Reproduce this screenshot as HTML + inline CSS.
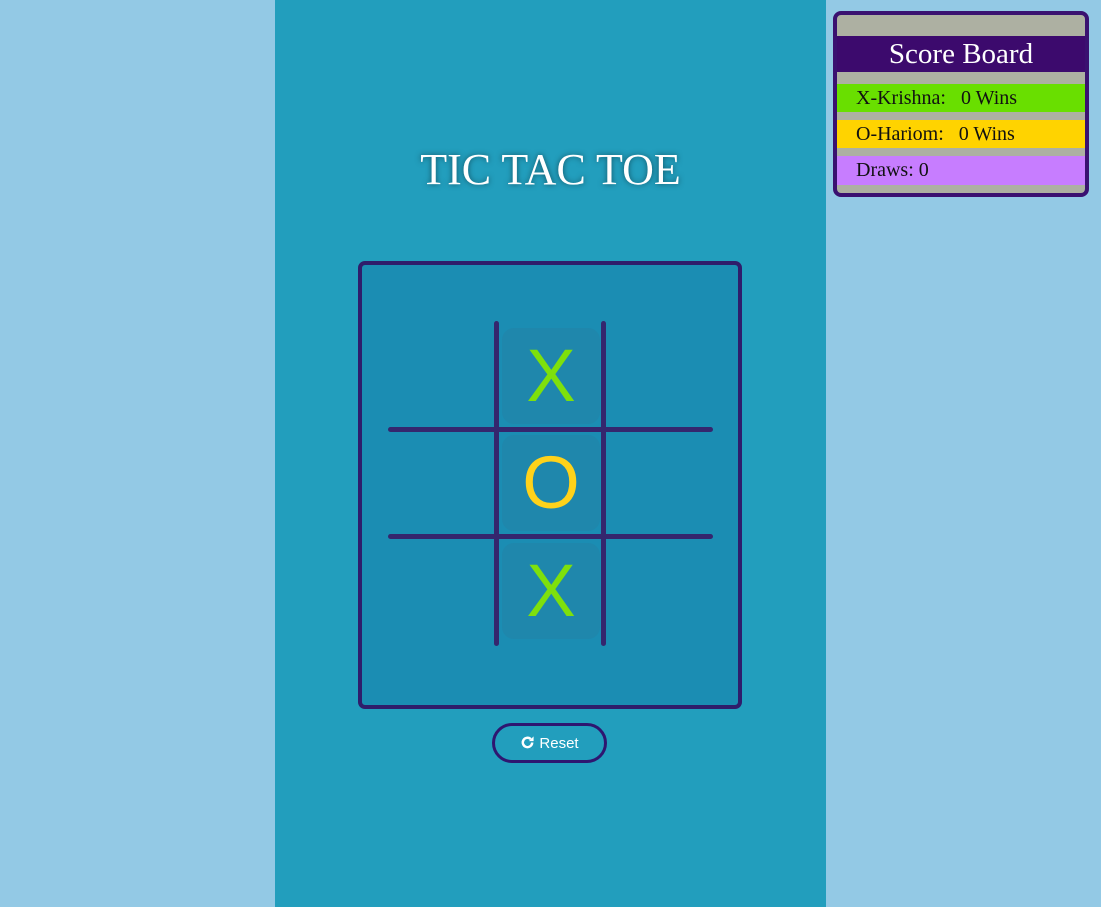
<!DOCTYPE html>
<html><head><style>
body{margin:0;width:1101px;height:907px;background:#93c9e5;position:relative;overflow:hidden;font-family:"Liberation Serif",serif}
.c{position:absolute;left:275px;top:0;width:551px;height:907px;background:#229ebd}
h1{position:absolute;left:275px;width:551px;top:145px;margin:0;text-align:center;font-weight:normal;font-size:44px;color:#fff;text-shadow:0 0 6px rgba(0,0,0,.5);line-height:50px}
.b{position:absolute;left:358px;top:261px;width:376px;height:440px;border:4px solid #2f1d6b;border-radius:7px;background:#1b8db3}
.l{position:absolute;background:#35266e;border-radius:3px}
.cell{position:absolute;left:502px;width:98px;height:96px;background:#1f87ac;border-radius:12px;font-family:"Liberation Sans",sans-serif;font-size:74px;text-align:center;line-height:96px}
.s{position:absolute;left:833px;top:11px;width:248px;height:178px;border:4px solid #3a1170;border-radius:8px;background:#adb0a2;overflow:hidden}
.r{position:absolute;left:0;width:248px;font-size:20px;padding-left:19px;box-sizing:border-box;color:#111}
.btn{position:absolute;left:492px;top:723px;width:109px;height:34px;border:3px solid #2e1670;border-radius:20px;font-family:"Liberation Sans",sans-serif;color:#fff;font-size:15px;line-height:36px;text-align:center}
</style></head><body>
<div class="c"></div>
<h1>TIC TAC TOE</h1>
<div class="b"></div>
<div class="cell" style="top:328px;color:#7ee00c">X</div>
<div class="cell" style="top:435px;color:#ffd21a">O</div>
<div class="cell" style="top:543px;color:#7ee00c">X</div>
<div class="l" style="left:494px;top:321px;width:5px;height:325px"></div>
<div class="l" style="left:601px;top:321px;width:5px;height:325px"></div>
<div class="l" style="left:388px;top:427px;width:325px;height:5px"></div>
<div class="l" style="left:388px;top:534px;width:325px;height:5px"></div>
<div class="btn"><svg width="15" height="15" viewBox="0 0 16 16" style="vertical-align:-2px;margin-right:4px"><path d="M13 8a5 5 0 1 1-1.5-3.6" fill="none" stroke="#fff" stroke-width="2.6"/><path d="M14.5 1.5v5h-5z" fill="#fff"/></svg>Reset</div>
<div class="s">
<div class="r" style="top:21px;height:36px;background:#3c0a6d;color:#fff;font-size:29px;text-align:center;padding:0;line-height:36px">Score Board</div>
<div class="r" style="top:69px;height:28px;background:#69df00;line-height:28px">X-Krishna:&nbsp;&nbsp; 0 Wins</div>
<div class="r" style="top:105px;height:28px;background:#ffd300;line-height:28px">O-Hariom:&nbsp;&nbsp; 0 Wins</div>
<div class="r" style="top:141px;height:29px;background:#c77dff;line-height:29px">Draws: 0</div>
</div>
</body></html>
